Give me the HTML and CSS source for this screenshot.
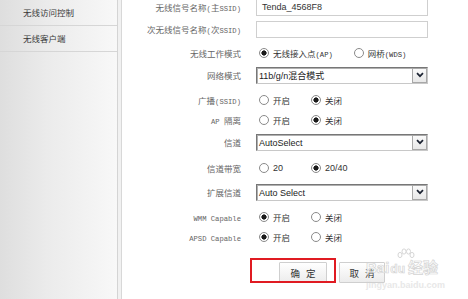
FILE: index.html
```html
<!DOCTYPE html>
<html lang="zh-CN">
<head>
<meta charset="utf-8">
<title>无线基本设置</title>
<link rel="stylesheet" href="styles.css">
</head>
<body>
<div class="page">
  <aside class="sidebar">
    <div class="nav-item">无线访问控制</div>
    <div class="nav-item">无线客户端</div>
  </aside>
  <div class="rule"></div>
  <main class="content">
    <div class="form">
      <div class="row">
        <div class="label">无线信号名称<span class="en">(</span>主<span class="en">SSID)</span></div>
        <div class="field"><div class="input">Tenda_4568F8</div></div>
      </div>
      <div class="row g2">
        <div class="label">次无线信号名称<span class="en">(</span>次<span class="en">SSID)</span></div>
        <div class="field"><div class="input"></div></div>
      </div>
      <div class="row g4">
        <div class="label">无线工作模式</div>
        <div class="field">
          <label class="opt"><input type="radio" class="radio" name="mode" checked><span>无线接入点<span class="en">(AP)</span></span></label>
          <label class="opt"><input type="radio" class="radio" name="mode"><span>网桥<span class="en">(WDS)</span></span></label>
        </div>
      </div>
      <div class="row g2">
        <div class="label">网络模式</div>
        <div class="field"><div class="select"><span class="sel-text">11b/g/n混合模式</span><span class="sel-arrow"><svg width="8" height="6" viewBox="0 0 8 6"><path d="M1 1.2 L4 4.2 L7 1.2" fill="none" stroke="#1d2433" stroke-width="1.7"/></svg></span></div></div>
      </div>
      <div class="row g5">
        <div class="label">广播<span class="en">(SSID)</span></div>
        <div class="field">
          <label class="opt"><input type="radio" class="radio" name="bc"><span>开启</span></label>
          <label class="opt"><input type="radio" class="radio" name="bc" checked><span>关闭</span></label>
        </div>
      </div>
      <div class="row">
        <div class="label"><span class="en">AP </span>隔离</div>
        <div class="field">
          <label class="opt"><input type="radio" class="radio" name="iso"><span>开启</span></label>
          <label class="opt"><input type="radio" class="radio" name="iso" checked><span>关闭</span></label>
        </div>
      </div>
      <div class="row g2">
        <div class="label">信道</div>
        <div class="field"><div class="select"><span class="sel-text">AutoSelect</span><span class="sel-arrow"><svg width="8" height="6" viewBox="0 0 8 6"><path d="M1 1.2 L4 4.2 L7 1.2" fill="none" stroke="#1d2433" stroke-width="1.7"/></svg></span></div></div>
      </div>
      <div class="row g6">
        <div class="label">信道带宽</div>
        <div class="field">
          <label class="opt"><input type="radio" class="radio" name="bw"><span class="num">20</span></label>
          <label class="opt"><input type="radio" class="radio" name="bw" checked><span class="num">20/40</span></label>
        </div>
      </div>
      <div class="row g4">
        <div class="label">扩展信道</div>
        <div class="field"><div class="select"><span class="sel-text">Auto Select</span><span class="sel-arrow"><svg width="8" height="6" viewBox="0 0 8 6"><path d="M1 1.2 L4 4.2 L7 1.2" fill="none" stroke="#1d2433" stroke-width="1.7"/></svg></span></div></div>
      </div>
      <div class="row g5">
        <div class="label"><span class="en">WMM Capable</span></div>
        <div class="field">
          <label class="opt"><input type="radio" class="radio" name="wmm" checked><span>开启</span></label>
          <label class="opt"><input type="radio" class="radio" name="wmm"><span>关闭</span></label>
        </div>
      </div>
      <div class="row">
        <div class="label"><span class="en">APSD Capable</span></div>
        <div class="field">
          <label class="opt"><input type="radio" class="radio" name="apsd" checked><span>开启</span></label>
          <label class="opt"><input type="radio" class="radio" name="apsd"><span>关闭</span></label>
        </div>
      </div>
      <div class="buttons">
        <button class="btn">确定</button>
        <button class="btn btn-cancel">取消</button>
        <div class="highlight"></div>
      </div>
    </div>
  </main>
  <div class="watermark">
    <svg class="paw" width="18" height="12" viewBox="0 0 18 12"><g fill="rgba(255,255,255,0.5)" stroke="#d6d6d6" stroke-width="1"><ellipse cx="3" cy="7" rx="2" ry="2.6"/><ellipse cx="7" cy="3.5" rx="2" ry="2.6"/><ellipse cx="11.5" cy="3.5" rx="2" ry="2.6"/><ellipse cx="15" cy="7" rx="2" ry="2.6"/></g></svg>
    <div class="wm-logo"><span>Bai</span><span class="wm-du">du</span><span class="wm-cn">经验</span></div>
    <div class="wm-url">jingyan.baidu.com</div>
  </div>
</div>
</body>
</html>
```

FILE: styles.css
```css
html, body {
  margin: 0;
  padding: 0;
  background: #fff;
}

body {
  width: 468px;
  height: 299px;
  overflow: hidden;
  font-family: "Noto Sans CJK SC", "Liberation Sans", sans-serif;
  font-size: 8.5px;
  color: #444;
}

.page {
  position: relative;
  display: flex;
  height: 299px;
}

.sidebar {
  width: 117px;
  flex: none;
  border-right: 1px solid #d4d4d4;
  background: linear-gradient(to right, #dedede 0%, #ebebeb 40%, #f8f8f8 100%);
}

.nav-item {
  height: 25px;
  line-height: 25px;
  padding-left: 23px;
  border-bottom: 1px solid #d6d6d6;
  color: #3a3a3a;
}

.rule {
  width: 3px;
  flex: none;
  background: #f1f1f1;
  border-right: 1px solid #d8d8d8;
}

.content {
  flex: 1;
}

.form {
  margin-top: -3px;
}

.row {
  display: flex;
  align-items: center;
  height: 20px;
}

.g2 { margin-top: 2px; }
.g4 { margin-top: 4px; }
.g5 { margin-top: 5px; }
.g6 { margin-top: 6px; }

.label {
  width: 119px;
  flex: none;
  text-align: right;
  color: #666;
  white-space: nowrap;
}

.en {
  font-family: "Liberation Mono", monospace;
  font-size: 7.2px;
  white-space: pre;
}

.field {
  margin-left: 15px;
  display: flex;
  align-items: center;
  color: #333;
}

.input {
  box-sizing: border-box;
  width: 172px;
  height: 17px;
  border: 1px solid #cfcfcf;
  padding-left: 5px;
  line-height: 15px;
  font-family: "Liberation Sans", sans-serif;
  font-size: 9px;
  color: #333;
}

.select {
  box-sizing: border-box;
  width: 172px;
  height: 17px;
  display: flex;
  border: 1px solid;
  border-color: #777 #c8c8c8 #c8c8c8 #777;
  box-shadow: inset 1px 1px 0 #b0b0b0;
  background: #fff;
}

.sel-text {
  flex: 1;
  padding-left: 2px;
  line-height: 16px;
  font-family: "Liberation Sans", "Noto Sans CJK SC", sans-serif;
  font-size: 9px;
  color: #222;
}

.sel-arrow {
  box-sizing: border-box;
  width: 15px;
  border: 1px solid #a8a8a8;
  background: linear-gradient(#fafafa, #e8e8e8);
  display: flex;
  align-items: center;
  justify-content: center;
}

.opt {
  display: flex;
  align-items: center;
  min-width: 31px;
  margin-right: 21px;
}

.opt:first-child {
  margin-left: 3px;
}

.radio {
  appearance: none;
  -webkit-appearance: none;
  box-sizing: border-box;
  width: 10px;
  height: 10px;
  margin: 0 4px 0 0;
  border: 1px solid #8a8a8a;
  border-radius: 50%;
  background: #fff;
}

.radio:checked {
  background: radial-gradient(circle, #1a1a1a 0 2.3px, #fff 2.9px);
}

.num {
  font-family: "Liberation Sans", sans-serif;
  font-size: 9px;
}

.buttons {
  position: relative;
  display: flex;
  margin-top: 11px;
  height: 25px;
  padding-left: 157px;
  align-items: flex-start;
}

.btn {
  box-sizing: border-box;
  margin: 4px 0 0;
  height: 21px;
  width: 48px;
  padding: 0 0 0 6px;
  border: 1px solid #cfcfcf;
  border-radius: 1px;
  background: linear-gradient(#ffffff, #ececec);
  font-family: "Noto Sans CJK SC", sans-serif;
  font-size: 9.5px;
  letter-spacing: 6px;
  color: #333;
}

.btn-cancel {
  margin-left: 12px;
  width: 46px;
}

.highlight {
  position: absolute;
  left: 128px;
  top: 0;
  width: 86px;
  height: 25px;
  box-sizing: border-box;
  border: 2px solid #e01b22;
}

.watermark {
  position: absolute;
  left: 366px;
  top: 248px;
  width: 102px;
  pointer-events: none;
  white-space: nowrap;
}

.paw {
  display: block;
  margin-left: 31px;
}

.wm-logo {
  display: flex;
  align-items: baseline;
  gap: 1px;
  font-family: "Liberation Sans", "Noto Sans CJK SC", sans-serif;
  font-weight: bold;
  font-size: 15px;
  line-height: 16px;
  color: rgba(255, 255, 255, 0.6);
  -webkit-text-stroke: 0.7px #d4d4d4;
}

.wm-du {
  font-size: 12px;
}

.wm-cn {
  font-size: 15px;
  margin-left: 2px;
}

.wm-url {
  margin-top: 3px;
  font-family: "Liberation Sans", sans-serif;
  font-size: 9px;
  font-weight: bold;
  color: #e8e8e8;
}
```
